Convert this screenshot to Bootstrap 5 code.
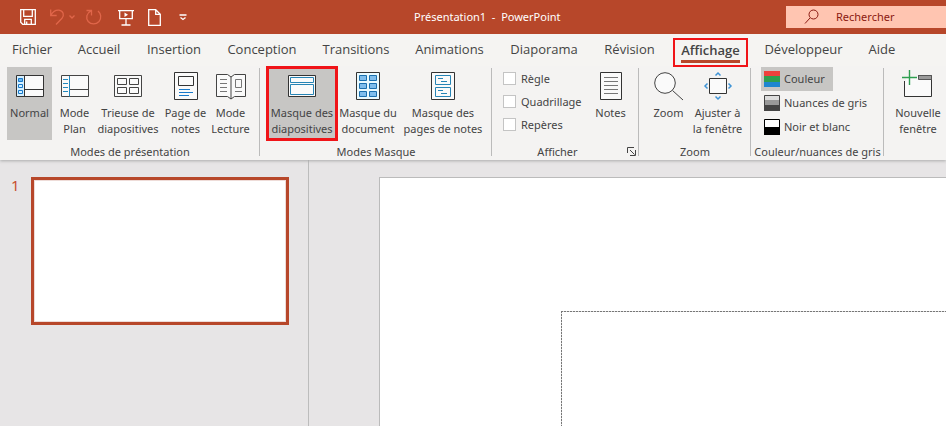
<!DOCTYPE html>
<html lang="fr">
<head>
<meta charset="utf-8">
<meta name="viewport" content="width=device-width, initial-scale=1">
<title>Présentation1 - PowerPoint</title>
<link href="https://cdn.jsdelivr.net/npm/bootstrap@5.3.0/dist/css/bootstrap.min.css" rel="stylesheet">
<style>
:root{--brand:#b7472a;--ink:#444;--sel:#c7c6c4;--mark:#f01418}
body{font-family:"Noto Sans","Open Sans",sans-serif;font-size:11px;line-height:16px;color:var(--ink);background:#e7e5e6}
button{font:inherit;color:inherit;background:none;border:0;padding:0}
svg{display:block;fill:none;flex:none;overflow:visible}
.titlebar{background:var(--brand);height:34px;color:#fff}
.quick{width:378px;padding-left:20px}
.quick svg{stroke:#fff;stroke-width:1.3}
.quick .dim{stroke:#e0664a}
.quick-gap{margin-left:14px}
.doc-title{white-space:pre;padding-left:36px}
.search-box{width:160px;height:22px;background:#ffc5b1;color:#8b1a12;padding-left:18px}
.search-box input{border:0;background:none;outline:0;color:inherit;font:inherit;width:100px;padding:0}
.search-box input::placeholder{color:#8b1a12;opacity:1}
.tabs{display:grid;grid-template-columns:64px 70px 80px 96px 92px 95px 94px 77px 84px 103px 54px;height:32px;background:#f5f4f2;font-family:"Open Sans","Noto Sans",sans-serif;font-size:13px;position:relative;z-index:1}
.tabs a{color:var(--ink);text-decoration:none;text-align:center;padding-top:7px;white-space:nowrap}
.tabs a.current{font-weight:600;border:2px solid var(--mark);margin:4px 4px 0 5px;padding-top:0;height:29px}
.tabs a.current span{display:inline-block;border-bottom:3px solid var(--brand);line-height:20px}
.ribbon{background:#f4f3f2;height:94px;box-shadow:0 1px 3px #aaa;position:relative}
.ribbon-group{flex:none;padding:1px 0 0;position:relative;display:flex;flex-direction:column}
.ribbon-group + .ribbon-group::before{content:"";position:absolute;left:-1px;top:2px;bottom:4px;width:1px;background:#bbb}
.g-views{width:260px}.g-masters{width:232px}.g-show{width:147px}.g-zoom{width:112px}.g-colour{width:133px}.g-window{width:68px}
.tools{display:flex;height:77px;align-items:flex-start;padding-left:7px}
.group-name{text-align:center;line-height:16px;white-space:nowrap}
.tool{height:73px;display:flex;flex-direction:column;align-items:center;white-space:nowrap;padding-top:5px}
.tool svg{margin-bottom:5px}
.tool span{margin:0 -10px}
.w-s{width:45px}.w-m{width:62px}.w-l{width:70px}.w-xl{width:88px}
.selected{background:var(--sel)}
.marked{outline:3px solid var(--mark);outline-offset:-2px}
.g-show .tools{padding-left:11px}
.checks{width:85px}
.checks label{display:flex;align-items:center;gap:5px;height:23px;white-space:nowrap}
.checks input{appearance:none;flex:none;width:13px;height:13px;border:1px solid #c4c4c4;background:#fff;margin:0}
.launcher{position:absolute;right:3px;bottom:4px}
.g-colour .tools{padding-left:10px}
.tone{display:flex;align-items:center;gap:4px;height:24px;padding:0 8px 0 3px;white-space:nowrap}
.thumbs{width:309px;border-right:1px solid #bcbcbc;padding:17px 19px 0 11px;gap:12px}
.slide-number{font-size:15px;color:#c8502f;width:8px}
.thumbnail-slide{border:3px solid var(--brand);background:#fff;aspect-ratio:258/148;box-shadow:inset 0 0 0 1px #eedcd8}
.canvas{padding:17px 0 0 70px;overflow:hidden}
.slide{background:#fff;border:1px solid #bbb;border-width:1px 0 0 1px;padding:133px 0 0 181px}
.placeholder-box{--dash:#777 0 2px,#ddd 2px 3px;background:repeating-linear-gradient(90deg,var(--dash)) 0 0/100% 1px no-repeat,repeating-linear-gradient(var(--dash)) 0 0/1px 100% no-repeat}
</style>
<script src="https://cdn.jsdelivr.net/npm/bootstrap@5.3.0/dist/js/bootstrap.bundle.min.js"></script>
</head>
<body class="d-flex flex-column vh-100 overflow-hidden">
<header class="titlebar d-flex align-items-center flex-shrink-0">
  <div class="quick d-flex align-items-center flex-shrink-0">
    <button aria-label="Enregistrer"><svg width="16" height="16"><path d="M.7.7h14.6v14.6H2.7l-2-2zM3.7.7v6.6h8.6V.7M4.7 15v-4.700h6.600V15M6.700 15v-2.500"/></svg></button>
    <button class="quick-gap" aria-label="Annuler"><svg class="dim" width="14" height="18"><path d="M.7 1.500v6h6M1 7C3 3.500 5.500 1.800 9 2.200c4.500.600 5.500 5.300 3 8.100L6 16.500"/></svg></button>
    <button class="ms-1" aria-label="Options d'annulation"><svg class="dim" width="8" height="6"><path d="M1.500 1.500 4 4l2.500-2.500"/></svg></button>
    <button class="ms-2" aria-label="Rétablir"><svg class="dim" width="20" height="18"><path d="M2.500 2.500h5v5M14 3c3 2.500 3.800 7 1 10.500-3 3.300-8 3.200-10.800 0C1.500 10 2.500 5 7 2.800"/></svg></button>
    <button class="quick-gap" aria-label="Démarrer le diaporama"><svg width="16" height="17"><path d="M0 1.700h16M1.700 2v7.600h12.600V2M8 10v6M3.500 16h9"/><path d="m6.500 3.500 3.500 2.200L6.500 8z" fill="#fff" stroke="none"/></svg></button>
    <button class="quick-gap" aria-label="Nouveau"><svg width="13" height="17"><path d="M.7.700h7l4.600 4.600v11H.7zM7.700.700v4.600h4.600"/></svg></button>
    <button class="quick-gap ps-1" aria-label="Personnaliser"><svg width="8" height="7"><path d="M.5 1h7M1.500 3.500 4 5.500l2.500-2"/></svg></button>
  </div>
  <div class="doc-title">Présentation1  -  PowerPoint</div>
  <div class="search-box d-flex align-items-center ms-auto flex-shrink-0">
    <svg width="16" height="16" stroke="#8b1a12"><circle cx="9.500" cy="5.500" r="4.500"/><path d="m6 9-5 5.500"/></svg>
    <input class="ms-3" type="text" placeholder="Rechercher" aria-label="Rechercher">
  </div>
</header>
<nav class="tabs flex-shrink-0" aria-label="Onglets">
  <a href="#">Fichier</a><a href="#">Accueil</a><a href="#">Insertion</a><a href="#">Conception</a><a href="#">Transitions</a><a href="#">Animations</a><a href="#">Diaporama</a><a href="#">Révision</a><a href="#" class="current" aria-current="page"><span>Affichage</span></a><a href="#">Développeur</a><a href="#">Aide</a>
</nav>
<div class="ribbon d-flex flex-shrink-0">
  <section class="ribbon-group g-views">
    <div class="tools">
      <button class="tool w-s selected"><svg width="28" height="28"><path d="M.5 3.500h27v21H.5z" fill="#fafafa"/><path d="M1 4h8v20H1z" fill="#d5f0ff"/><path d="M.5 3.500h27v21H.5zM8.500 3.500v21M8.500 17.500h19" stroke="#333"/><path d="M2.500 6.500h4v3h-4z" fill="#69b6ee" stroke="#1979ca"/><path d="M2.500 12.500h4v3h-4zM2.500 18.500h4v3h-4z" stroke="#1979ca"/></svg><span>Normal</span></button>
      <button class="tool w-s"><svg width="28" height="28"><path d="M.5 3.500h27v21H.5z" fill="#fafafa" stroke="#444"/><path d="M9 17.500h18.500" stroke="#444"/><path d="M8.500 4v20.500M2 7.500h5M2 11.500h5M2 15.500h5M2 19.500h5" stroke="#2388bd"/></svg><span>Mode<br>Plan</span></button>
      <button class="tool w-m"><svg width="28" height="28" stroke="#444"><path d="M.5 3.500h27v21H.5z" fill="#fafafa"/><path d="M3.500 6.500h9v6h-9zM15.500 6.500h9v6h-9zM3.500 15.500h9v6h-9zM15.500 15.500h9v6h-9z"/></svg><span>Trieuse de<br>diapositives</span></button>
      <button class="tool w-s ms-1"><svg width="28" height="28"><path d="M2.500.5h23v27h-23z" fill="#fafafa" stroke="#333"/><path d="M6.500 4.500h15v9h-15z" stroke="#333"/><path d="M7 17.500h11M7 20.500h14M7 23.500h10" stroke="#1979ca"/></svg><span>Page de<br>notes</span></button>
      <button class="tool w-s"><svg width="30" height="28" stroke="#444"><path d="M15 5 11.500 2.500H.5v22h11L15 27l3.500-2.500h11v-22h-11zV27" fill="#fafafa"/><path d="M4 7.500h7M4 11.500h7M4 15.500h7M4 19.500h7M19.500 7.500h6v8h-6zM19 19.500h7" stroke="#777"/></svg><span>Mode<br>Lecture</span></button>
    </div>
    <div class="group-name">Modes de présentation</div>
  </section>
  <section class="ribbon-group g-masters">
    <div class="tools">
      <button class="tool w-l selected marked"><svg width="28" height="28"><path d="M.5 3.500h27v21H.5z" fill="#fafafa" stroke="#333"/><path d="M2.500 5.500h23v5h-23zM2.500 12.500h23v10h-23z" stroke="#2684b5"/></svg><span>Masque des<br>diapositives</span></button>
      <button class="tool w-m"><svg width="28" height="28"><path d="M2.500.5h23v27h-23z" fill="#e9faff" stroke="#333"/><path d="M5.500 3.500h7v5h-7zM15.500 3.500h7v5h-7zM5.500 11.500h7v5h-7zM15.500 11.500h7v5h-7zM5.500 19.500h7v5h-7zM15.500 19.500h7v5h-7z" fill="#7fbdec" stroke="#1a6fae"/></svg><span>Masque du<br>document</span></button>
      <button class="tool w-xl"><svg width="28" height="28"><path d="M2.500.5h23v27h-23z" fill="#fafafa" stroke="#333"/><path d="M6.500 3.500h15v9h-15zM6.500 15.500h15v9h-15zM9 6.500h5M12 9.500h6M9 18.500h5M12 21.500h6" stroke="#2684b5"/></svg><span>Masque des<br>pages de notes</span></button>
    </div>
    <div class="group-name">Modes Masque</div>
  </section>
  <section class="ribbon-group g-show">
    <div class="tools">
      <div class="checks"><label><input type="checkbox">Règle</label><label><input type="checkbox">Quadrillage</label><label><input type="checkbox">Repères</label></div>
      <button class="tool w-s"><svg width="22" height="28"><path d="M.5.500h21v27H.5z" fill="#fafafa" stroke="#333"/><path d="M4 5.500h14M4 9.500h14M4 13.500h14M4 17.500h14M4 21.500h14" stroke="#777"/></svg><span>Notes</span></button>
    </div>
    <div class="group-name pe-3">Afficher</div>
    <button class="launcher" aria-label="Paramètres de la grille"><svg width="9" height="9" stroke="#444"><path d="M.5 6V.5H7M3 3l4.500 4.500M8.500 3v5.500H3"/></svg></button>
  </section>
  <section class="ribbon-group g-zoom">
    <div class="tools">
      <button class="tool w-s"><svg width="30" height="28" stroke="#444"><circle cx="11" cy="11" r="10.300" fill="#fafafa"/><path d="M18.500 18.500 29 28"/></svg><span>Zoom</span></button>
      <button class="tool w-s ms-1"><svg width="28" height="28"><path d="M5.500 6.500h17v15h-17z" fill="#fafafa" stroke="#333"/><path d="M11.500 3.500 14 1l2.500 2.500M11.500 24.500 14 27l2.500-2.500M3.500 11.500 1 14l2.500 2.500M24.500 11.500 27 14l-2.500 2.500" stroke="#3e93d6" stroke-width="1.500"/></svg><span>Ajuster à<br>la fenêtre</span></button>
    </div>
    <div class="group-name">Zoom</div>
  </section>
  <section class="ribbon-group g-colour">
    <div class="tools flex-column">
      <button class="tone selected"><svg width="16" height="16"><path d="M0 0h16v5H0z" fill="#ee403d"/><path d="M0 5h16v6H0z" fill="#2e9e4f"/><path d="M0 11h16v5H0z" fill="#1e86d0"/></svg>Couleur</button>
      <button class="tone"><svg width="16" height="16"><path d="M0 0h16v5H0z" fill="#dcdcdc"/><path d="M0 5h16v5H0z" fill="#999"/><path d="M0 10h16v6H0z" fill="#444"/><path d="M.5.500h15v15H.5z" stroke="#444"/></svg>Nuances de gris</button>
      <button class="tone"><svg width="16" height="16"><path d="M.5.500h15v15H.5z" fill="#fff" stroke="#000"/><path d="M0 8h16v8H0z" fill="#000"/></svg>Noir et blanc</button>
    </div>
    <div class="group-name">Couleur/nuances de gris</div>
  </section>
  <section class="ribbon-group g-window">
    <div class="tools ps-0 justify-content-center">
      <button class="tool w-m"><svg width="36" height="28"><path d="M4.500 3.500h27v21h-27z" fill="#fafafa" stroke="#333"/><path d="M18.500 3.500h13v4h-13z" fill="#999" stroke="#555"/><path d="M3 1h15v3.500H3zM3 3h3v6H3z" fill="#f4f3f2"/><path d="M9.500-2v15M2 5.500h15" stroke="#2e9e4f" stroke-width="1.400"/></svg><span>Nouvelle<br>fenêtre</span></button>
    </div>
  </section>
</div>
<main class="d-flex flex-grow-1">
  <aside class="thumbs d-flex align-items-start flex-shrink-0" aria-label="Diapositives">
    <span class="slide-number">1</span>
    <div class="thumbnail-slide flex-grow-1"></div>
  </aside>
  <div class="canvas d-flex flex-grow-1"><div class="slide d-flex flex-grow-1"><div class="placeholder-box flex-grow-1"></div></div></div>
</main>
</body>
</html>
